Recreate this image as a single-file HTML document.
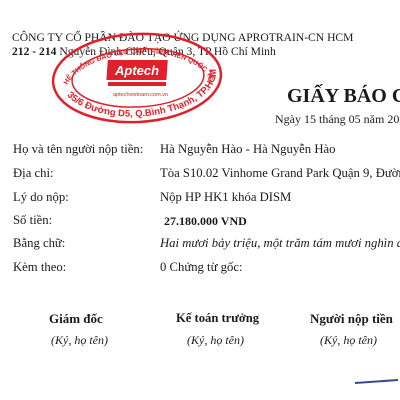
<!DOCTYPE html>
<html><head><meta charset="utf-8"><style>
html,body{margin:0;padding:0;width:400px;height:400px;overflow:hidden;background:#fff}
body{position:relative;font-family:"Liberation Serif",serif;color:#1a1a1a}
#w{position:absolute;left:0;top:0;width:400px;height:400px;overflow:hidden}
.t{position:absolute;white-space:nowrap;font-size:12.7px;line-height:1}
.b{font-weight:bold}.i{font-style:italic}
</style></head><body><div id="w">
<div class="t" style="left:12px;top:32px;font-size:11.6px">CÔNG TY CỔ PHẦN ĐÀO TẠO ỨNG DỤNG APROTRAIN-CN HCM</div>
<div class="t" style="left:12px;top:46px;font-size:11.6px"><b>212 - 214</b> Nguyễn Đình Chiểu, Quận 3, TP Hồ Chí Minh</div>

<svg style="position:absolute;left:0;top:0" width="400" height="400">
<g transform="rotate(-3 137 78)">
<ellipse cx="137" cy="78" rx="84" ry="44" fill="none" stroke="#e0202a" stroke-width="2.5"/>
<ellipse cx="138" cy="78" rx="66" ry="29" fill="none" stroke="#e0202a" stroke-width="1.5"/>
<path id="top" d="M65 86 A74 39 0 0 1 211 86" fill="none"/>
<text font-family="Liberation Sans,sans-serif" font-size="7" font-weight="bold" fill="#e0202a"><textPath href="#top" startOffset="3%">HỆ THỐNG ĐÀO TẠO LẬP TRÌNH VIÊN QUỐC TẾ APTECH</textPath></text>
<path id="bot" d="M60 76 A77 40 0 0 0 216 76" fill="none"/>
<text font-family="Liberation Sans,sans-serif" font-size="9.5" font-weight="bold" fill="#e0202a"><textPath href="#bot" startOffset="9%">35/6 Đường D5, Q.Bình Thạnh, TP.HCM</textPath></text>
</g>
<rect x="112" y="60" width="60" height="20" fill="#e0202a" transform="skewX(-4)"/>
<text x="115" y="75" font-family="Liberation Sans,sans-serif" font-size="13" font-style="italic" font-weight="bold" fill="#fff">Aptech</text>
<rect x="108" y="82" width="58" height="4" fill="#e0202a"/>
<text x="113" y="96" font-family="Liberation Sans,sans-serif" font-size="5.5" fill="#e0202a">aptechvietnam.com.vn</text>
<path d="M355 383 L398 380" stroke="#3a4a8a" stroke-width="2"/>
</svg>

<div class="t b" style="left:287px;top:86px;font-size:20px">GIẤY BÁO CÓ</div>
<div class="t" style="left:275px;top:113px;font-size:12px">Ngày 15 tháng 05 năm 2023</div>

<div class="t" style="left:13px;top:143px">Họ và tên người nộp tiền:</div>
<div class="t" style="left:160px;top:143px">Hà Nguyễn Hào - Hà Nguyễn Hào</div>
<div class="t" style="left:13px;top:167px">Địa chỉ:</div>
<div class="t" style="left:160px;top:167px">Tòa S10.02 Vinhome Grand Park Quận 9, Đường</div>
<div class="t" style="left:13px;top:191px">Lý do nộp:</div>
<div class="t" style="left:160px;top:191px">Nộp HP HK1 khóa DISM</div>
<div class="t" style="left:13px;top:214px">Số tiền:</div>
<div class="t b" style="left:164px;top:215px;font-size:12px">27.180.000 VND</div>
<div class="t" style="left:13px;top:237px">Bằng chữ:</div>
<div class="t i" style="left:160px;top:237px">Hai mươi bảy triệu, một trăm tám mươi nghìn đồng</div>
<div class="t" style="left:13px;top:261px">Kèm theo:</div>
<div class="t" style="left:160px;top:261px">0 Chứng từ gốc:</div>

<div class="t b" style="left:49px;top:312px;font-size:13px">Giám đốc</div>
<div class="t i" style="left:51px;top:334px;font-size:12px">(Ký, họ tên)</div>
<div class="t b" style="left:176px;top:312px;font-size:12.6px">Kế toán trưởng</div>
<div class="t i" style="left:187px;top:334px;font-size:12px">(Ký, họ tên)</div>
<div class="t b" style="left:310px;top:312px;font-size:13px">Người nộp tiền</div>
<div class="t i" style="left:320px;top:334px;font-size:12px">(Ký, họ tên)</div>
</div></body></html>
